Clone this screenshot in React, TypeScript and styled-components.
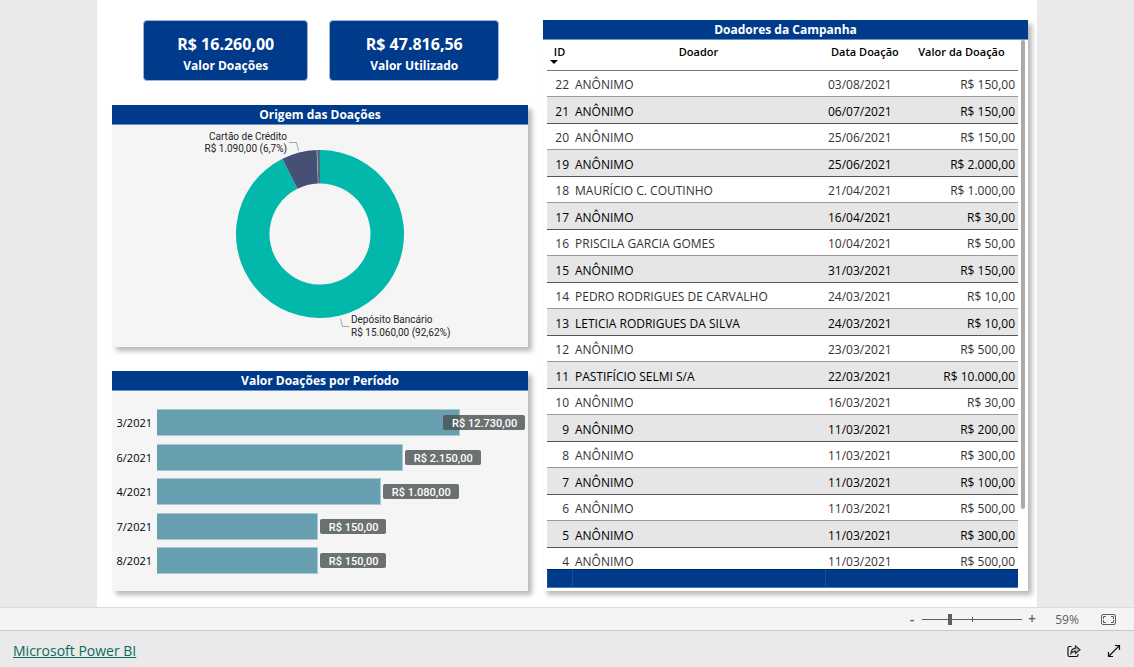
import React from "react";
import styled, { createGlobalStyle } from "styled-components";

const NAVY = "#003a8a";

const Global = createGlobalStyle`
  *, *::before, *::after { box-sizing: border-box; }
  body { margin: 0; background: #eaeaea; font-family: "Open Sans", "Noto Sans", sans-serif; color: #000; }
  h2, p, ul { margin: 0; padding: 0; }
`;

const Shell = styled.div`
  min-height: 100vh;
  display: flex;
  flex-direction: column;
`;

const Canvas = styled.main`
  flex: 1;
  display: flex;
  padding: 0 97px;
`;

const Report = styled.div`
  flex: 1;
  min-width: 0;
  display: grid;
  grid-template-columns: minmax(0, 416fr) minmax(0, 485fr);
  gap: 15px;
  align-items: start;
  background: #fff;
  padding: 20px 9px 16px 15px;
`;

const Column = styled.div`
  display: flex;
  flex-direction: column;
  gap: 24px;
`;

const Cards = styled.div`
  display: grid;
  grid-template-columns: 165fr 169fr;
  gap: 21px;
  padding: 0 29px 0 31px;
`;

const Card = styled.div`
  height: 61px;
  border: 1px solid #9db5d6;
  border-radius: 4px;
  background: ${NAVY};
  color: #fff;
  text-align: center;
  font-weight: 700;
  padding-top: 12px;
`;

const CardValue = styled.p`
  font-size: 16px;
  line-height: 22px;
`;

const CardLabel = styled.p`
  font-size: 12px;
  line-height: 22px;
`;

const Panel = styled.section<{ $fill: string }>`
  background: ${(p) => p.$fill};
  box-shadow: 4px 4px 5px rgba(0, 0, 0, 0.28);
`;

const PanelTitle = styled.h2`
  height: 20px;
  background: ${NAVY};
  border-bottom: 1px solid #6f92c4;
  color: #fff;
  font-size: 12px;
  line-height: 19px;
  font-weight: 700;
  text-align: center;
`;

const Donut = styled.svg`
  display: block;
  width: 100%;
  height: 222px;
  font-family: Roboto, sans-serif;
  font-size: 10px;
  fill: #252423;
`;

const BarList = styled.ul`
  list-style: none;
  height: 200px;
  padding: 18px 3px 17px 0;
  display: flex;
  flex-direction: column;
  justify-content: space-between;
`;

const BarRow = styled.li`
  display: flex;
  align-items: center;
`;

const BarName = styled.span`
  width: 45px;
  padding-right: 5px;
  text-align: right;
  font-size: 11px;
  line-height: 15px;
`;

const Track = styled.div`
  position: relative;
  flex: 1;
  height: 27px;
`;

const Bar = styled.div`
  height: 100%;
  background: #689fb0;
  border: 1px solid #a9c9d2;
  border-left: 0;
`;

const Tag = styled.span`
  position: absolute;
  top: 6px;
  height: 15px;
  padding: 0 8px 0 9px;
  border-radius: 2px;
  background: rgba(72, 80, 80, 0.8);
  color: #fff;
  font: 500 11px/17px Roboto, sans-serif;
  white-space: nowrap;
`;

const TableArea = styled.div`
  display: flex;
  gap: 3px;
  padding: 0 3px 3px 4px;
`;

const Scroller = styled.div`
  flex: 1;
  min-width: 0;
  height: 548px;
  overflow: hidden;
`;

const Thumb = styled.div`
  width: 4px;
  height: 469px;
  border-radius: 2px;
  background: #aaa;
`;

const Table = styled.table`
  width: 100%;
  border-collapse: separate;
  border-spacing: 0;
  table-layout: fixed;
  font-size: 12px;

  th, td { padding: 0; }
`;

const IdCol = styled.col`
  width: 25px;
`;

const DateCol = styled.col`
  width: 17%;
`;

const ValueCol = styled.col`
  width: 24%;
`;

const Head = styled.th`
  height: 31px;
  border-bottom: 1px solid #777;
  vertical-align: top;
  font-size: 11px;
  line-height: 24px;
  font-weight: 600;
  position: relative;
`;

const SortMark = styled.svg`
  position: absolute;
  left: 3px;
  top: 20px;
`;

const Row = styled.tr`
  height: 26px;
  color: #333;

  &:nth-child(even) {
    height: 27px;
    background: #e6e6e6;
    color: #000;
  }
`;

const Cell = styled.td<{ $align?: string }>`
  text-align: ${(p) => p.$align || "left"};
  border-bottom: 1px solid #999;
  line-height: 20px;
  white-space: nowrap;

  && { padding: 3px 3px 0; }

  ${Row}:nth-child(even) & { border-bottom-color: #555; }
`;

const Total = styled.td`
  position: sticky;
  bottom: 0;
  height: 19px;
  background: ${NAVY};
  border-top: 1px solid #00265c;
  border-bottom: 1px solid #4a78b8;
  border-left: 1px solid #1c4f99;
`;

const ZoomBar = styled.div`
  height: 24px;
  background: #f4f4f4;
  border-top: 1px solid #dcdcdc;
  border-bottom: 1px solid #c8c8c8;
  display: flex;
  align-items: center;
  justify-content: flex-end;
  padding-right: 18px;
  color: #605e5c;
  font-size: 12px;
`;

const PlainButton = styled.button`
  border: 0;
  background: none;
  padding: 0;
  color: inherit;
  font: 600 14px/20px "Open Sans", sans-serif;
  display: flex;
  align-items: center;
  justify-content: center;
`;

const StepButton = styled(PlainButton)`
  width: 20px;
`;

const Slider = styled.input`
  appearance: none;
  width: 100px;
  height: 12px;
  margin: 0;
  background:
    linear-gradient(#605e5c, #605e5c) center / 100% 1px no-repeat,
    linear-gradient(#605e5c, #605e5c) center / 1px 5px no-repeat;

  &::-webkit-slider-thumb {
    appearance: none;
    width: 4px;
    height: 11px;
    background: #605e5c;
  }
`;

const Percent = styled.output`
  width: 50px;
  text-align: center;
  margin-right: 9px;
`;

const Footer = styled.footer`
  height: 36px;
  display: flex;
  align-items: center;
  padding: 4px 13px 0;
  gap: 26px;
`;

const BrandLink = styled.a`
  margin-right: auto;
  color: #0b6a5b;
  font-size: 14px;
  line-height: 20px;
`;

type Donation = [number, string, string, string];

const donations: Donation[] = [
  [22, "ANÔNIMO", "03/08/2021", "150,00"],
  [21, "ANÔNIMO", "06/07/2021", "150,00"],
  [20, "ANÔNIMO", "25/06/2021", "150,00"],
  [19, "ANÔNIMO", "25/06/2021", "2.000,00"],
  [18, "MAURÍCIO C. COUTINHO", "21/04/2021", "1.000,00"],
  [17, "ANÔNIMO", "16/04/2021", "30,00"],
  [16, "PRISCILA GARCIA GOMES", "10/04/2021", "50,00"],
  [15, "ANÔNIMO", "31/03/2021", "150,00"],
  [14, "PEDRO RODRIGUES DE CARVALHO", "24/03/2021", "10,00"],
  [13, "LETICIA RODRIGUES DA SILVA", "24/03/2021", "10,00"],
  [12, "ANÔNIMO", "23/03/2021", "500,00"],
  [11, "PASTIFÍCIO SELMI S/A", "22/03/2021", "10.000,00"],
  [10, "ANÔNIMO", "16/03/2021", "30,00"],
  [9, "ANÔNIMO", "11/03/2021", "200,00"],
  [8, "ANÔNIMO", "11/03/2021", "300,00"],
  [7, "ANÔNIMO", "11/03/2021", "100,00"],
  [6, "ANÔNIMO", "11/03/2021", "500,00"],
  [5, "ANÔNIMO", "11/03/2021", "300,00"],
  [4, "ANÔNIMO", "11/03/2021", "500,00"],
];

const periods = [
  { name: "3/2021", value: "12.730,00", share: 82.3 },
  { name: "6/2021", value: "2.150,00", share: 66.8 },
  { name: "4/2021", value: "1.080,00", share: 60.8 },
  { name: "7/2021", value: "150,00", share: 43.7 },
  { name: "8/2021", value: "150,00", share: 43.7 },
];

const CX = 208;
const CY = 109;
const OUTER = 84;
const INNER = 50.5;

function slice(from: number, to: number) {
  const pt = (r: number, f: number) => {
    const a = f * 2 * Math.PI;
    return `${(CX + r * Math.sin(a)).toFixed(2)} ${(CY - r * Math.cos(a)).toFixed(2)}`;
  };
  const large = to - from > 0.5 ? 1 : 0;
  return `M${pt(OUTER, from)}A${OUTER} ${OUTER} 0 ${large} 1 ${pt(OUTER, to)}L${pt(INNER, to)}A${INNER} ${INNER} 0 ${large} 0 ${pt(INNER, from)}Z`;
}

function OriginChart() {
  return (
    <Donut viewBox="0 0 416 222" role="img" aria-label="Origem das Doações">
      <path d={slice(0, 0.9262)} fill="#01b8aa" />
      <path d={slice(0.9262, 0.9936)} fill="#464f74" />
      <path d={slice(0.9945, 0.9999)} fill="#4a6a78" />
      <path d="M177 17.500h7.500l2 8M228.500 193.500l2 8h7" fill="none" stroke="#a6a6a6" />
      <text x="175" y="15" textAnchor="end">Cartão de Crédito</text>
      <text x="175" y="27" textAnchor="end">R$ 1.090,00 (6,7%)</text>
      <text x="239" y="198">Depósito Bancário</text>
      <text x="239" y="211">R$ 15.060,00 (92,62%)</text>
    </Donut>
  );
}

export default function App() {
  return (
    <Shell>
      <Global />
      <Canvas>
        <Report>
          <Column>
            <Cards>
              <Card>
                <CardValue>R$ 16.260,00</CardValue>
                <CardLabel>Valor Doações</CardLabel>
              </Card>
              <Card>
                <CardValue>R$ 47.816,56</CardValue>
                <CardLabel>Valor Utilizado</CardLabel>
              </Card>
            </Cards>
            <Panel $fill="#f5f5f5">
              <PanelTitle>Origem das Doações</PanelTitle>
              <OriginChart />
            </Panel>
            <Panel $fill="#f5f5f5">
              <PanelTitle>Valor Doações por Período</PanelTitle>
              <BarList>
                {periods.map((p) => (
                  <BarRow key={p.name}>
                    <BarName>{p.name}</BarName>
                    <Track>
                      <Bar style={{ width: `${p.share}%` }} />
                      <Tag style={{ left: `min(${p.share}% + 2px, 100% - 82px)` }}>R$ {p.value}</Tag>
                    </Track>
                  </BarRow>
                ))}
              </BarList>
            </Panel>
          </Column>
          <Panel $fill="#fff">
            <PanelTitle>Doadores da Campanha</PanelTitle>
            <TableArea>
              <Scroller>
                <Table>
                  <colgroup>
                    <IdCol />
                    <col />
                    <DateCol />
                    <ValueCol />
                  </colgroup>
                  <thead>
                    <tr>
                      <Head scope="col">
                        ID
                        <SortMark width="8" height="4" viewBox="0 0 8 4" aria-hidden="true">
                          <path d="M0 0h8L4 4z" />
                        </SortMark>
                      </Head>
                      <Head scope="col">Doador</Head>
                      <Head scope="col">Data Doação</Head>
                      <Head scope="col">Valor da Doação</Head>
                    </tr>
                  </thead>
                  <tbody>
                    {donations.map(([id, donor, date, value]) => (
                      <Row key={id}>
                        <Cell $align="right">{id}</Cell>
                        <Cell>{donor}</Cell>
                        <Cell>{date}</Cell>
                        <Cell $align="right">R$ {value}</Cell>
                      </Row>
                    ))}
                  </tbody>
                  <tfoot>
                    <tr>
                      <Total />
                      <Total />
                      <Total colSpan={2} />
                    </tr>
                  </tfoot>
                </Table>
              </Scroller>
              <Thumb />
            </TableArea>
          </Panel>
        </Report>
      </Canvas>
      <ZoomBar>
        <StepButton aria-label="Reduzir">-</StepButton>
        <Slider type="range" min={10} max={190} defaultValue={59} aria-label="Zoom" />
        <StepButton aria-label="Ampliar">+</StepButton>
        <Percent>59%</Percent>
        <PlainButton aria-label="Ajustar à página">
          <svg width="15" height="11" viewBox="0 0 15 11" fill="none" stroke="#605e5c">
            <rect x="0.5" y="0.5" width="14" height="10" rx="1.5" />
            <path d="M5 2.5H2.5V5M10 2.5h2.5V5M5 8.5H2.5V6M10 8.5h2.5V6" />
          </svg>
        </PlainButton>
      </ZoomBar>
      <Footer>
        <BrandLink href="#">Microsoft Power BI</BrandLink>
        <PlainButton aria-label="Compartilhar">
          <svg width="14" height="13" viewBox="0 0 14 13" fill="none" stroke="#111" strokeWidth="1.2">
            <path d="M4.500 1.500H2.500a1.500 1.500 0 0 0-1.500 1.500v7a1.500 1.500 0 0 0 1.500 1.500h7a1.500 1.500 0 0 0 1.500-1.500V9" />
            <path d="M8.500 1v2.200C5.500 3.500 4 5.500 4 8.500 5 7 6.500 6.300 8.500 6.300v2.200L13 4.700z" fill="#bbb" stroke="#333" />
          </svg>
        </PlainButton>
        <PlainButton aria-label="Tela cheia">
          <svg width="14" height="14" viewBox="0 0 14 14" fill="none" stroke="#111" strokeWidth="1.2">
            <path d="M1.500 12.500L12.500 1.500M8 1.500h4.500V6M1.500 8v4.500H6" />
          </svg>
        </PlainButton>
      </Footer>
    </Shell>
  );
}
